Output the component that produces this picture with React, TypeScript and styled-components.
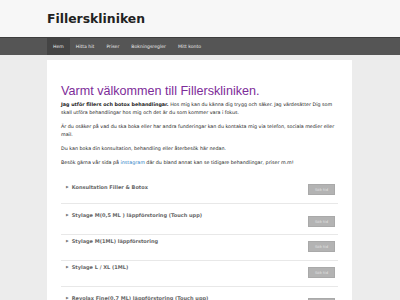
import React from "react";
import styled, { createGlobalStyle } from "styled-components";

const Global = createGlobalStyle`
  html, body { margin: 0; padding: 0; }
  body {
    background: #ececec;
    font-family: "DejaVu Sans", Verdana, sans-serif;
    width: 400px;
    height: 300px;
    overflow: hidden;
  }
`;

const Header = styled.header`
  background: #f7f7f7;
  height: 37px;
  display: flex;
  align-items: center;
  padding-left: 47px;
  box-sizing: border-box;
`;

const Logo = styled.h1`
  margin: 0;
  font-family: "DejaVu Sans", Verdana, sans-serif;
  font-weight: bold;
  font-size: 12.4px;
  color: #222;
`;

const Nav = styled.nav`
  background: #555;
  border-top: 1px solid #3e3e3e;
  height: 17px;
  display: flex;
  padding-left: 47px;
`;

const NavItem = styled.a<{ $active?: boolean }>`
  display: flex;
  align-items: center;
  padding: 0 6px;
  font-size: 4.6px;
  color: #ececec;
  background: ${(p) => (p.$active ? "#444" : "transparent")};
  text-decoration: none;
`;

const Main = styled.div`
  display: flex;
  padding-top: 5px;
`;

const Side = styled.div`
  width: 47px;
  flex: none;
`;

const Panel = styled.main`
  width: 305px;
  background: #fff;
  padding: 23px 14px 0;
  box-sizing: border-box;
  height: 240px;
  overflow: hidden;
`;

const Title = styled.h2`
  margin: 1px 0 2px;
  font-family: "Liberation Sans", Arial, sans-serif;
  font-weight: normal;
  font-size: 12.6px;
  line-height: 15px;
  color: #7d2c99;
`;

const P = styled.p`
  margin: 0 0 6px;
  font-size: 4.8px;
  line-height: 8px;
  color: #222;
`;

const Link = styled.a`
  color: #2a7fc5;
  text-decoration: none;
`;

const List = styled.div`
  margin-top: 16px;
`;

const Item = styled.div<{ $top: number; $bottom: number }>`
  display: flex;
  justify-content: space-between;
  align-items: flex-start;
  padding: ${(p) => p.$top}px 3px ${(p) => p.$bottom}px 5px;
  border-bottom: 1px solid #e8e8e8;
`;

const ItemTitle = styled.div`
  font-size: 5px;
  line-height: 8px;
  font-weight: bold;
  color: #666;
  display: flex;
  align-items: center;
  gap: 3px;
`;

const Arrow = styled.span`
  font-size: 3.5px;
  color: #777;
`;

const Btn = styled.button<{ $offset: number }>`
  width: 27px;
  height: 11px;
  margin-top: ${(p) => p.$offset}px;
  background: #b3b3b3;
  border: 1px solid #a9a9a9;
  color: #e2e2e2;
  font-family: "DejaVu Sans", Verdana, sans-serif;
  font-size: 3.8px;
  padding: 0;
  flex: none;
`;

const items = [
  { t: "Konsultation Filler & Botox", top: 0, bottom: 8, off: 1 },
  { t: "Stylage M(0,5 ML ) läppförstoring (Touch upp)", top: 7, bottom: 7, off: 5 },
  { t: "Stylage M(1ML) läppförstoring", top: 2, bottom: 8, off: 4 },
  { t: "Stylage L / XL (1ML)", top: 2, bottom: 8, off: 4 },
  { t: "Revolax Fine(0,7 ML) läppförstoring (Touch upp)", top: 7, bottom: 8, off: 4 },
];

export default function App() {
  return (
    <>
      <Global />
      <Header>
        <Logo>Fillerskliniken</Logo>
      </Header>
      <Nav>
        <NavItem $active>Hem</NavItem>
        <NavItem>Hitta hit</NavItem>
        <NavItem>Priser</NavItem>
        <NavItem>Bokningsregler</NavItem>
        <NavItem>Mitt konto</NavItem>
      </Nav>
      <Main>
        <Side />
        <Panel>
          <Title>Varmt välkommen till Fillerskliniken.</Title>
          <P>
            <b>Jag utför fillers och botox behandlingar.</b> Hos mig kan du känna dig trygg och säker. Jag värdesätter Dig som skall utföra behandlingar hos mig och det är du som kommer vara i fokus.
          </P>
          <P>
            Är du osäker på vad du ska boka eller har andra funderingar kan du kontakta mig via telefon, sociala medier eller mail.
          </P>
          <P>Du kan boka din konsultation, behandling eller återbesök här nedan.</P>
          <P>
            Besök gärna vår sida på <Link>instagram</Link> där du bland annat kan se tidigare behandlingar, priser m.m!
          </P>
          <List>
            {items.map((it) => (
              <Item key={it.t} $top={it.top} $bottom={it.bottom}>
                <ItemTitle>
                  <Arrow>▶</Arrow>
                  {it.t}
                </ItemTitle>
                <Btn $offset={it.off}>Sök tid</Btn>
              </Item>
            ))}
          </List>
        </Panel>
      </Main>
    </>
  );
}
